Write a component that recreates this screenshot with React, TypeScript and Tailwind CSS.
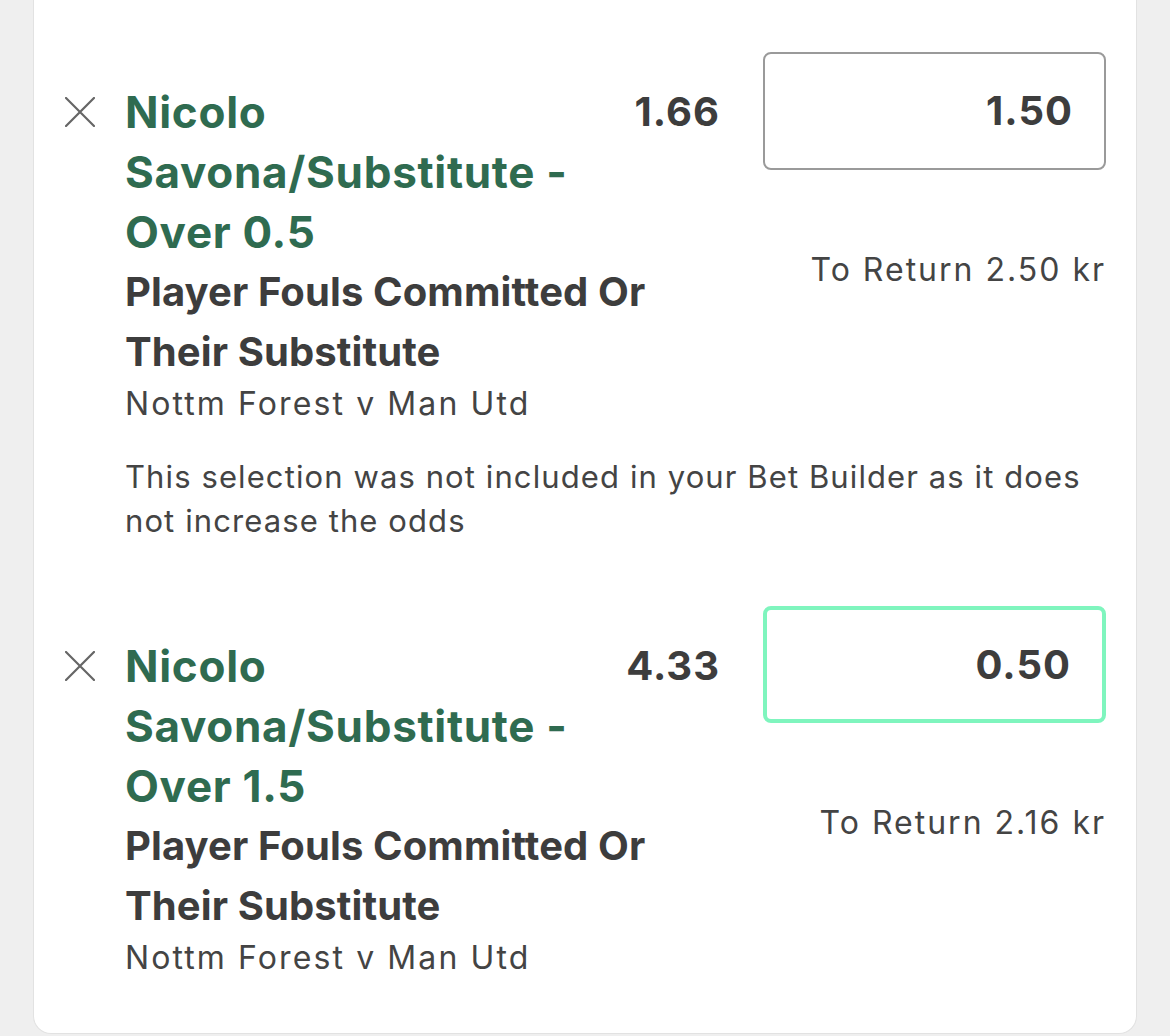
type Selection = {
  id: number
  title: string
  odds: string
  stake: string
  toReturn: string
  market: string
  event: string
  note?: string
  active?: boolean
}

const selections: Selection[] = [
  {
    id: 1,
    title: 'Nicolo Savona/Substitute - Over 0.5',
    odds: '1.66',
    stake: '1.50',
    toReturn: '2.50 kr',
    market: 'Player Fouls Committed Or Their Substitute',
    event: 'Nottm Forest v Man Utd',
    note: 'This selection was not included in your Bet Builder as it does not increase the odds',
  },
  {
    id: 2,
    title: 'Nicolo Savona/Substitute - Over 1.5',
    odds: '4.33',
    stake: '0.50',
    toReturn: '2.16 kr',
    market: 'Player Fouls Committed Or Their Substitute',
    event: 'Nottm Forest v Man Utd',
    active: true,
  },
]

function RemoveIcon() {
  return (
    <svg width="30" height="30" viewBox="0 0 30 30" className="text-[#666]">
      <path d="M1 1L29 29M29 1L1 29" stroke="currentColor" strokeWidth="2.2" strokeLinecap="square" />
    </svg>
  )
}

function SelectionRow({ s }: { s: Selection }) {
  return (
    <div>
      <div className="flex items-start">
        <div className="w-[60px] shrink-0 pt-[45px]">
          <RemoveIcon />
        </div>
        <div className="flex-1 min-w-0 pt-[30px]">
          <div className="flex items-start justify-between gap-6">
            <h3 className="text-[44px] leading-[60px] tracking-[0.7px] font-bold text-[#2f6b50] max-w-[470px]">
              {s.title}
            </h3>
            <span className="text-[40px] leading-[60px] tracking-[1px] font-bold text-[#3d3d3d] shrink-0">
              {s.odds}
            </span>
          </div>
          <p className="text-[40px] leading-[60px] tracking-[0.1px] font-bold text-[#3d3d3d] max-w-[570px]">
            {s.market}
          </p>
          <p className="text-[32px] leading-[44px] tracking-[2.1px] text-[#444]">{s.event}</p>
        </div>
        <div className="w-[343px] shrink-0 ml-[43px] flex flex-col items-end">
          <div
            className={
              s.active
                ? 'w-full h-[117px] rounded-[8px] border-4 border-[#7ff5be] flex items-center justify-end pr-[31px]'
                : 'w-full h-[118px] rounded-[8px] border-2 border-[#9a9a9a] flex items-center justify-end pr-[31px]'
            }
          >
            <span className="text-[40px] tracking-[1px] font-bold text-[#3d3d3d]">{s.stake}</span>
          </div>
          <p className="mt-[78px] text-[32px] leading-[44px] tracking-[2px] text-[#444]">
            To Return {s.toReturn}
          </p>
        </div>
      </div>
      {s.note && (
        <p className="pl-[60px] mt-[29px] text-[31px] leading-[44px] tracking-[1.1px] text-[#444] pr-[10px]">
          {s.note}
        </p>
      )}
    </div>
  )
}

export default function App() {
  return (
    <div className="h-[1036px] overflow-hidden bg-[#efefef] px-[33px] font-['Inter',sans-serif]">
      <div className="h-[1034px] bg-white border border-t-0 border-[#e2e2e2] rounded-b-[18px] pl-[31px] pr-[30px] pt-[52px]">
        <div className="flex flex-col gap-[63px]">
          {selections.map((s) => (
            <SelectionRow key={s.id} s={s} />
          ))}
        </div>
      </div>
    </div>
  )
}
